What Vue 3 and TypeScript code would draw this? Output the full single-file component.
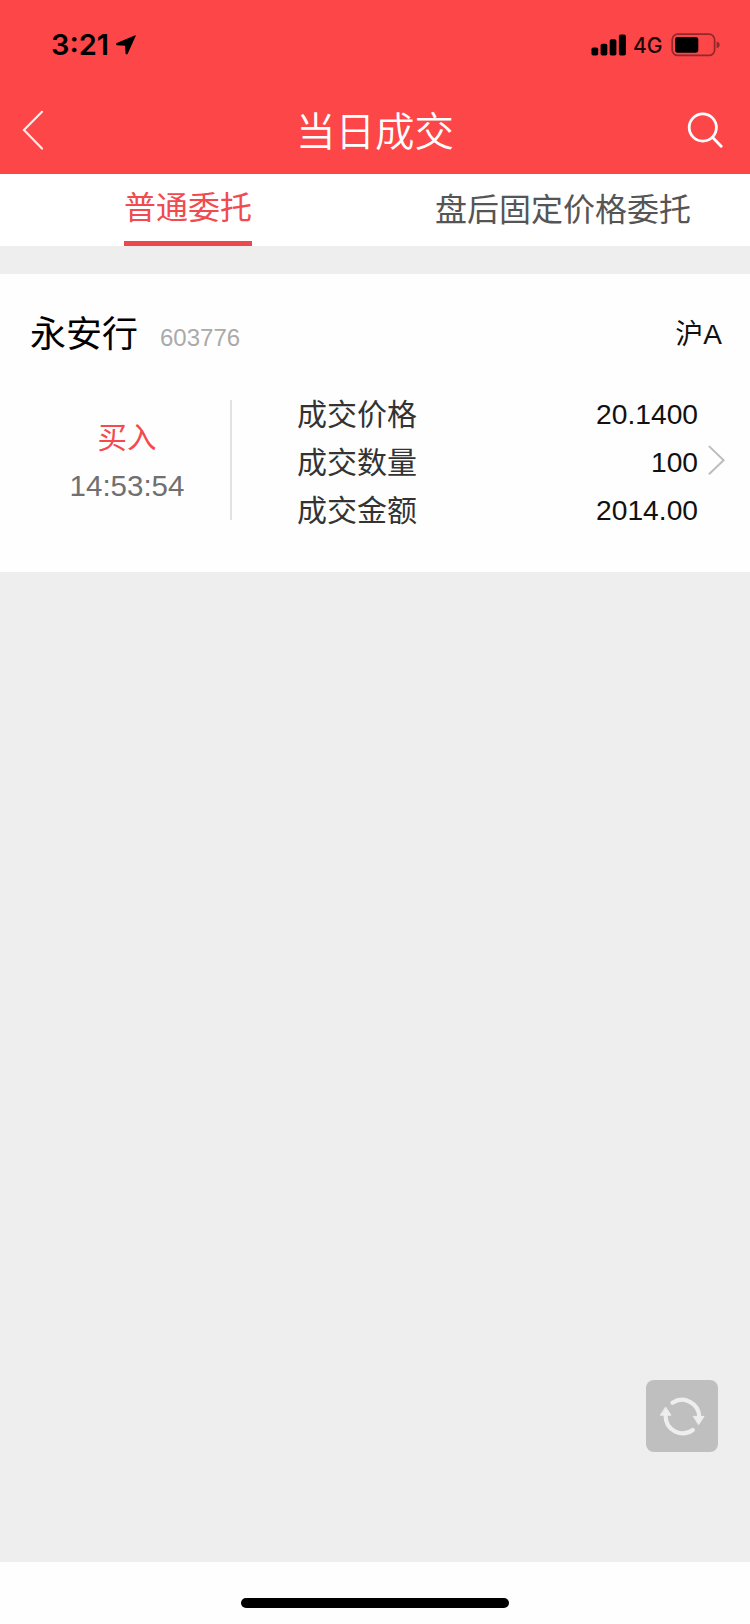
<script setup lang="ts">
import { ref } from 'vue'

interface Tab {
  id: string
  label: string
}

interface Deal {
  name: string
  code: string
  market: string
  side: string
  time: string
  details: { label: string; value: string }[]
}

const tabs: Tab[] = [
  { id: 'normal', label: '普通委托' },
  { id: 'after', label: '盘后固定价格委托' },
]
const activeTab = ref('normal')

const deals: Deal[] = [
  {
    name: '永安行',
    code: '603776',
    market: '沪A',
    side: '买入',
    time: '14:53:54',
    details: [
      { label: '成交价格', value: '20.1400' },
      { label: '成交数量', value: '100' },
      { label: '成交金额', value: '2014.00' },
    ],
  },
]
</script>

<template>
  <div class="screen">
    <header class="header">
      <div class="status">
        <span class="clock">3:21</span>
        <svg class="location" width="22" height="22" viewBox="0 0 22 22">
          <path d="M20.3 1.2 L1.2 9.2 Q0.7 10.7 1.8 11.2 L10 11.7 L10.6 19.8 Q11.6 21.1 12.7 19.8 L20.8 1.7 Q20.9 1 20.3 1.2Z" />
        </svg>
        <svg class="signal" width="36" height="22" viewBox="0 0 36 22">
          <rect x="0.5" y="13.5" width="6.7" height="8" rx="1.8" />
          <rect x="9.6" y="9.8" width="6.7" height="11.7" rx="1.8" />
          <rect x="18.7" y="5.3" width="6.7" height="16.2" rx="1.8" />
          <rect x="27.9" y="0.6" width="7" height="20.9" rx="1.8" />
        </svg>
        <span class="network">4G</span>
        <svg class="battery" width="49" height="24" viewBox="0 0 49 24">
          <rect x="1.2" y="1.2" width="42.4" height="21.2" rx="5.5" fill="none" stroke="#000" stroke-opacity="0.42" stroke-width="1.7" />
          <rect x="4" y="4" width="23.3" height="15.8" rx="2.8" />
          <path d="M45.6 8.6 Q48.7 9.6 48.7 11.9 Q48.7 14.2 45.6 15.2Z" fill-opacity="0.42" />
        </svg>
      </div>
      <div class="nav">
        <svg class="back" width="22" height="42" viewBox="0 0 22 42">
          <path d="M20 2.8 L2 21 L20 39.6" />
        </svg>
        <h1 class="title">当日成交</h1>
        <svg class="search" width="36" height="36" viewBox="0 0 36 36">
          <circle cx="15.8" cy="15.5" r="13.6" />
          <path d="M25.4 25.2 L34.2 34.2" />
        </svg>
      </div>
    </header>

    <nav class="tabs">
      <button
        v-for="tab in tabs"
        :key="tab.id"
        class="tab"
        :class="{ active: tab.id === activeTab }"
        @click="activeTab = tab.id"
      >
        <span class="tab-label">{{ tab.label }}</span>
      </button>
    </nav>

    <main class="list">
      <article v-for="deal in deals" :key="deal.code" class="card">
        <div class="card-head">
          <span class="name">{{ deal.name }}</span>
          <span class="code">{{ deal.code }}</span>
          <span class="market">{{ deal.market }}</span>
        </div>
        <div class="card-body">
          <div class="summary">
            <span class="side">{{ deal.side }}</span>
            <span class="time">{{ deal.time }}</span>
          </div>
          <dl class="details">
            <div v-for="row in deal.details" :key="row.label" class="row">
              <dt>{{ row.label }}</dt>
              <dd>{{ row.value }}</dd>
            </div>
          </dl>
          <svg class="more" width="18" height="30" viewBox="0 0 18 30">
            <path d="M1.5 1.6 L15.6 15.2 L1.5 28.8" />
          </svg>
        </div>
      </article>
    </main>

    <button class="refresh" aria-label="刷新">
      <svg width="72" height="72" viewBox="0 0 72 72">
        <path d="M26.5 22.8 A17.2 17.2 0 0 1 53.2 36.5" />
        <path d="M46.8 50 A17.2 17.2 0 0 1 19.6 36" />
        <path class="head" d="M47.6 36.4 L58 36.4 L52.8 44.4Z" />
        <path class="head" d="M14.6 35.2 L25 35.2 L19.8 27.4Z" />
      </svg>
    </button>

    <footer class="home"><span class="home-bar"></span></footer>
  </div>
</template>

<style>
body {
  margin: 0;
}
</style>

<style scoped>
.screen {
  position: relative;
  display: flex;
  flex-direction: column;
  width: 750px;
  height: 1624px;
  overflow: hidden;
  background: #eee;
  font-family: "Liberation Sans", "Noto Sans CJK SC", sans-serif;
  color: #111;
}
.header {
  flex: none;
  height: 174px;
  background: #fc4648;
}
.status {
  display: flex;
  align-items: center;
  box-sizing: border-box;
  height: 90px;
  padding: 0 30px 0 51px;
}
.clock {
  width: 64px;
  font: 600 29px/34px Inter, sans-serif;
  color: #000;
}
.signal {
  margin-left: auto;
}
.network {
  width: 38px;
  margin-left: 6px;
  padding-top: 1px;
  font: 500 21px/26px Inter, sans-serif;
  color: #1c0808;
}
.nav {
  display: flex;
  align-items: center;
  justify-content: space-between;
  height: 80px;
  padding: 0 27px 0 22px;
}
.back,
.search,
.more {
  fill: none;
  stroke: #ffe9e9;
  stroke-width: 2.2;
  stroke-linecap: round;
}
.search {
  stroke: #fff;
  stroke-width: 2.8;
}
.title {
  margin: 0;
  padding: 4px 0 0 19px;
  font-size: 39.5px;
  font-weight: 350;
  line-height: 60px;
  color: #fff;
}
.tabs {
  display: grid;
  grid-template-columns: 1fr 1fr;
  flex: none;
  height: 72px;
  background: #fff;
}
.tab {
  display: flex;
  justify-content: center;
  padding: 0 0 0 1px;
  border: 0;
  background: none;
  font: inherit;
  font-size: 32px;
  color: #555;
}
.tab-label {
  box-sizing: border-box;
  height: 72px;
  line-height: 73px;
}
.active .tab-label {
  line-height: 69px;
  color: #f14a50;
  border-bottom: 5px solid #ee484f;
}
.list {
  flex: 1;
  padding-top: 28px;
}
.card {
  box-sizing: border-box;
  height: 298px;
  background: #fefefe;
}
.card-head {
  display: flex;
  align-items: baseline;
  height: 126px;
  padding: 0 28px 0 30px;
  line-height: 122px;
}
.name {
  font-size: 36px;
  color: #000;
}
.code {
  margin-left: 22px;
  font-size: 24px;
  color: #aaa;
  transform: translateY(-1px);
}
.market {
  margin-left: auto;
  font-size: 28px;
  transform: translateY(-3px);
}
.card-body {
  display: flex;
  align-items: center;
  height: 120px;
}
.summary {
  display: flex;
  flex-direction: column;
  align-items: center;
  justify-content: center;
  box-sizing: border-box;
  width: 232px;
  height: 120px;
  padding: 4px 0 0 24px;
  border-right: 2px solid #e2e2e2;
  line-height: 48px;
}
.side {
  font-size: 29.5px;
  color: #f5494e;
}
.time {
  font-size: 29.5px;
  color: #707070;
}
.details {
  width: 401px;
  margin: 0 0 0 65px;
  padding-top: 4px;
}
.row {
  display: flex;
  justify-content: space-between;
  height: 48px;
  line-height: 48px;
}
.row dt {
  padding-top: 1px;
  font-size: 30px;
  color: #333;
}
.row dd {
  margin: 0;
  font-size: 28.2px;
}
.more {
  margin-left: 10px;
  stroke: #bdbdbd;
  stroke-width: 2;
}
.refresh {
  position: absolute;
  right: 32px;
  bottom: 172px;
  width: 72px;
  height: 72px;
  padding: 0;
  border: 0;
  border-radius: 8px;
  background: #bfbfbf;
}
.refresh svg {
  display: block;
  fill: none;
  stroke: #eee;
  stroke-width: 4.2;
  stroke-linecap: round;
}
.refresh .head {
  fill: #eee;
  stroke-width: 1;
  stroke-linejoin: round;
}
.home {
  display: flex;
  justify-content: center;
  flex: none;
  box-sizing: border-box;
  height: 62px;
  padding-top: 36px;
  background: #fefefe;
}
.home-bar {
  width: 268px;
  height: 10px;
  border-radius: 5px;
  background: #000;
}
</style>
